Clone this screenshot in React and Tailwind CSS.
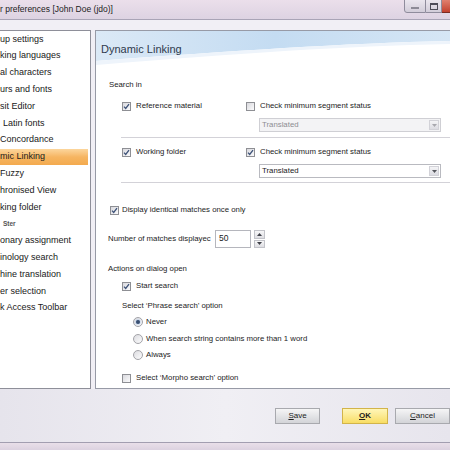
import React from 'react';

const navItems = [
  { label: 'up settings' },
  { label: 'king languages' },
  { label: 'al characters' },
  { label: 'urs and fonts' },
  { label: 'sit Editor' },
  { label: 'Latin fonts', indent: true },
  { label: 'Concordance' },
  { label: 'mic Linking', active: true },
  { label: 'Fuzzy' },
  { label: 'hronised View' },
  { label: 'king folder' },
  { label: 'Ster', indent: true, small: true },
  { label: 'onary assignment' },
  { label: 'inology search' },
  { label: 'hine translation' },
  { label: 'er selection' },
  { label: 'k Access Toolbar' },
];

function CheckBox({ checked }) {
  return (
    <span className="w-[9px] h-[9px] shrink-0 border border-[#8e8f94] bg-linear-to-br from-[#d9d9de] to-[#fbfbfc] flex items-center justify-center">
      {checked && (
        <svg width="7" height="7" viewBox="0 0 7 7">
          <path d="M1 3.6 L2.7 5.4 L6 1.2" stroke="#3d5278" strokeWidth="1.3" fill="none" />
        </svg>
      )}
    </span>
  );
}

function Radio({ checked }) {
  return (
    <span className="w-[10px] h-[10px] shrink-0 rounded-full border border-[#a3a3a8] bg-linear-to-br from-[#dcdce0] to-[#fcfcfd] flex items-center justify-center">
      {checked && <span className="w-[4px] h-[4px] rounded-full bg-[#3a4f70] shadow-[0_0_2px_#6b9bd8]" />}
    </span>
  );
}

function Dropdown({ disabled }) {
  return (
    <div
      className={`ml-[163px] w-[182px] h-[14px] flex border ${
        disabled ? 'border-[#cfcfd4] bg-[#f3f3f5] text-[#8d8d92]' : 'border-[#b9bac0] bg-white text-[#1a1a1a]'
      }`}
    >
      <span className="flex-1 pl-[2px] leading-[12px]">Translated</span>
      <span className="w-[10px] m-[1px] flex items-center justify-center bg-linear-to-b from-[#f4f4f6] to-[#dcdce2] border border-[#d2d2d8]">
        <svg width="5" height="3" viewBox="0 0 5 3">
          <path d="M0 0 H5 L2.5 3 Z" fill={disabled ? '#a8a8ae' : '#55565c'} />
        </svg>
      </span>
    </div>
  );
}

function Separator() {
  return <div className="ml-[25px] h-[2px] border-t border-[#d3d2d8] bg-white" />;
}

function Button({ children, primary, className = '' }) {
  return (
    <button
      className={`h-[16px] border text-[8px] flex items-center justify-center ${
        primary
          ? 'border-[#d2b44a] bg-linear-to-b from-[#fff6b8] to-[#f8dd62] font-bold'
          : 'border-[#a8a9ae] bg-linear-to-b from-[#f5f5f6] to-[#d3d4d8]'
      } ${className}`}
    >
      {children}
    </button>
  );
}

export default function App() {
  return (
    <div className="w-[450px] h-[450px] overflow-hidden flex flex-col bg-[#efedf3] text-[#1c1c1c] font-['Liberation_Sans',Arial,sans-serif]">
      {/* title bar */}
      <div className="h-[20px] shrink-0 flex bg-linear-to-b from-[#ebdfeb] to-[#ddd3e2] border-b border-[#a9a4b6]">
        <span className="text-[8.5px] leading-[19px]">r preferences [John Doe (jdo)]</span>
        <div className="ml-auto flex h-[14px] -mt-px">
          <span className="w-[22px] border border-[#8f8c9c] rounded-bl-[3px] bg-linear-to-b from-[#eae6ee] to-[#d2cdd9] flex items-end justify-center pb-[3px]">
            <span className="w-[8px] h-[2px] bg-[#8c8a96]" />
          </span>
          <span className="w-[16px] border-y border-r border-[#8f8c9c] bg-linear-to-b from-[#eae6ee] to-[#d2cdd9] flex items-center justify-center">
            <span className="w-[8px] h-[7px] border border-[#4d4c58] border-t-2" />
          </span>
          <span className="w-[8px] border-y border-[#7a2b22] bg-linear-to-b from-[#e0806f] to-[#c2402d]" />
        </div>
      </div>

      {/* body */}
      <div className="h-[369px] shrink-0 flex pt-[10px] bg-[#f1eff5]">
        <div className="w-[91px] h-[359px] shrink-0 bg-white border-t border-r border-b border-[#8e8f99] text-[9px] text-[#202020]">
          {navItems.map((item) => (
            <div
              key={item.label}
              className={`h-[16.8px] flex items-center mr-[2px] ${
                item.active ? 'bg-linear-to-b from-[#fcd69c] via-[#f6b561] to-[#f3aa4e]' : ''
              } ${item.indent ? 'pl-[3px]' : ''} ${item.small ? 'text-[6.5px] font-bold text-[#555]' : ''}`}
            >
              {item.label}
            </div>
          ))}
        </div>

        <div className="ml-[4px] w-[360px] h-[359px] shrink-0 bg-white border border-r-0 border-[#979aa6] text-[7.8px]">
          {/* header with swoosh */}
          <div className="relative h-[36px]">
            <svg className="absolute inset-0" width="359" height="36" viewBox="0 0 359 36">
              <defs>
                <linearGradient id="sw" x1="0" y1="0" x2="1" y2="0">
                  <stop offset="0" stopColor="#dbe9f6" />
                  <stop offset="0.5" stopColor="#c4dcf2" />
                  <stop offset="1" stopColor="#d6e6f5" />
                </linearGradient>
              </defs>
              <path d="M0 0 H359 V10 C250 12 140 20 0 30 Z" fill="url(#sw)" />
              <path d="M0 30 C140 20 250 12 359 10 V13 C250 15 150 22 0 34 Z" fill="#eef4fb" />
            </svg>
            <span className="relative block pl-[5px] pt-[12px] text-[11px] leading-[13px] text-[#2f3a4c]">Dynamic Linking</span>
          </div>

          <div className="h-[12px] mt-[12px] ml-[13px] flex items-center">Search in</div>

          <div className="h-[12px] mt-[9px] ml-[26px] flex items-center">
            <span className="w-[124px] flex items-center gap-[5px]">
              <CheckBox checked />
              <span>Reference material</span>
            </span>
            <CheckBox />
            <span className="ml-[5px]">Check minimum segment status</span>
          </div>
          <div className="mt-[6px]">
            <Dropdown disabled />
          </div>
          <div className="mt-[5px]">
            <Separator />
          </div>

          <div className="h-[12px] mt-[7px] ml-[26px] flex items-center">
            <span className="w-[124px] flex items-center gap-[5px]">
              <CheckBox checked />
              <span>Working folder</span>
            </span>
            <CheckBox checked />
            <span className="ml-[5px]">Check minimum segment status</span>
          </div>
          <div className="mt-[6px]">
            <Dropdown />
          </div>
          <div className="mt-[4px]">
            <Separator />
          </div>

          <div className="h-[12px] mt-[20px] ml-[14px] flex items-center gap-[3px]">
            <CheckBox checked />
            <span>Display identical matches once only</span>
          </div>

          <div className="h-[18px] mt-[14px] ml-[12px] flex items-center">
            <span className="w-[107px]">Number of matches displayec</span>
            <span className="w-[36px] h-[18px] border border-[#b5b6bd] pl-[3px] leading-[15px] text-[8.5px]">50</span>
            <span className="ml-[3px] w-[11px] h-[18px] flex flex-col gap-px">
              <span className="flex-1 border border-[#c2c3c9] bg-linear-to-b from-[#f7f7f8] to-[#dedee3] flex items-center justify-center">
                <svg width="5" height="3" viewBox="0 0 5 3"><path d="M0 3 H5 L2.5 0 Z" fill="#3f4048" /></svg>
              </span>
              <span className="flex-1 border border-[#c2c3c9] bg-linear-to-b from-[#f7f7f8] to-[#dedee3] flex items-center justify-center">
                <svg width="5" height="3" viewBox="0 0 5 3"><path d="M0 0 H5 L2.5 3 Z" fill="#3f4048" /></svg>
              </span>
            </span>
          </div>

          <div className="h-[12px] mt-[15px] ml-[12px] flex items-center">Actions on dialog open</div>

          <div className="h-[12px] mt-[5px] ml-[26px] flex items-center gap-[5px]">
            <CheckBox checked />
            <span>Start search</span>
          </div>

          <div className="h-[12px] mt-[8px] ml-[26px] flex items-center">Select &#8216;Phrase search&#8217; option</div>

          {[
            ['Never', true],
            ['When search string contains more than 1 word', false],
            ['Always', false],
          ].map(([label, on], i) => (
            <div key={label} className={`h-[12px] ml-[37px] flex items-center gap-[3px] ${i === 1 ? 'mt-[5px]' : 'mt-[4px]'}`}>
              <Radio checked={on} />
              <span>{label}</span>
            </div>
          ))}

          <div className="h-[12px] mt-[11px] ml-[26px] flex items-center gap-[5px]">
            <CheckBox />
            <span>Select &#8216;Morpho search&#8217; option</span>
          </div>
        </div>
      </div>

      {/* footer */}
      <div className="h-[53px] shrink-0 flex items-start pt-[19px] bg-linear-to-r from-[#e6e4ec] via-[#f0eff4] to-[#e7e5ed]">
        <Button className="ml-[275px] w-[54px]">
          <span><span className="underline">S</span>ave</span>
        </Button>
        <Button primary className="ml-[22px] w-[55px]">
          <span><span className="underline">O</span>K</span>
        </Button>
        <Button className="ml-[7px] w-[55px] shrink-0">
          <span><span className="underline">C</span>ancel</span>
        </Button>
      </div>
      <div className="h-[1px] shrink-0 bg-[#a29eb0]" />
      <div className="flex-1 bg-linear-to-b from-[#e9dfe9] to-[#dcd2e0]" />
    </div>
  );
}
